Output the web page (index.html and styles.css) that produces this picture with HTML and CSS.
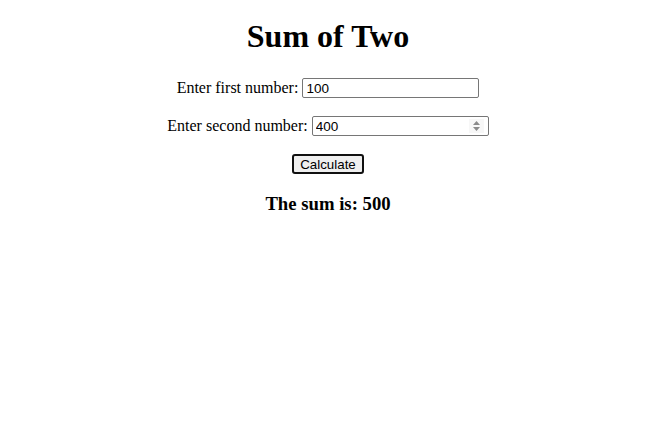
FILE: index.html
```html
<!DOCTYPE html>
<html>
<head>
<meta charset="utf-8">
<title>Sum of Two</title>
<link rel="stylesheet" href="styles.css">
</head>
<body class="page">
<h1 class="title">Sum of Two</h1>
<p class="row"><label for="a">Enter first number:</label> <input id="a" class="field" type="text" value="100"></p>
<p class="row"><label for="b">Enter second number:</label> <span class="numwrap"><input id="b" class="field" type="text" value="400"><span class="spin"><svg width="9" height="12" viewBox="0 0 9 12"><path d="M4.5 1 L8 5 H1 Z M4.5 11 L8 7 H1 Z" fill="#8a8a8a"/></svg></span></span></p>
<p class="row"><button class="btn" type="button">Calculate</button></p>
<h3 class="result">The sum is: 500</h3>
</body>
</html>
```
FILE: styles.css
```css
.page {
  margin: 8px;
  font-family: "Liberation Serif", "Times New Roman", serif;
  font-size: 16px;
  color: #000;
  background: #fff;
  text-align: center;
}
.title {
  font-size: 32px;
  font-weight: bold;
  margin: 10px 0 23px;
}
.row {
  margin: 18px 0;
}
.field {
  box-sizing: border-box;
  width: 177px;
  height: 20px;
  padding: 1px 3px;
  border: 1px solid #767676;
  border-radius: 2px;
  font-family: "Liberation Sans", Arial, sans-serif;
  font-size: 13.5px;
  color: #000;
  background: #fff;
  vertical-align: baseline;
}
.numwrap {
  position: relative;
  display: inline-block;
}
.spin {
  position: absolute;
  right: 5px;
  top: 3px;
  width: 15px;
  height: 14px;
  background: #f7f7f7;
  display: flex;
  align-items: center;
  justify-content: center;
}
.btn {
  box-sizing: border-box;
  width: 72px;
  height: 20px;
  padding: 0 6px;
  border: 2px solid #101010;
  border-radius: 3px;
  background: #efefef;
  font-family: "Liberation Sans", Arial, sans-serif;
  font-size: 13.33px;
  color: #000;
}
.result {
  font-size: 18.72px;
  font-weight: bold;
  margin: 18.72px 0;
}
```
